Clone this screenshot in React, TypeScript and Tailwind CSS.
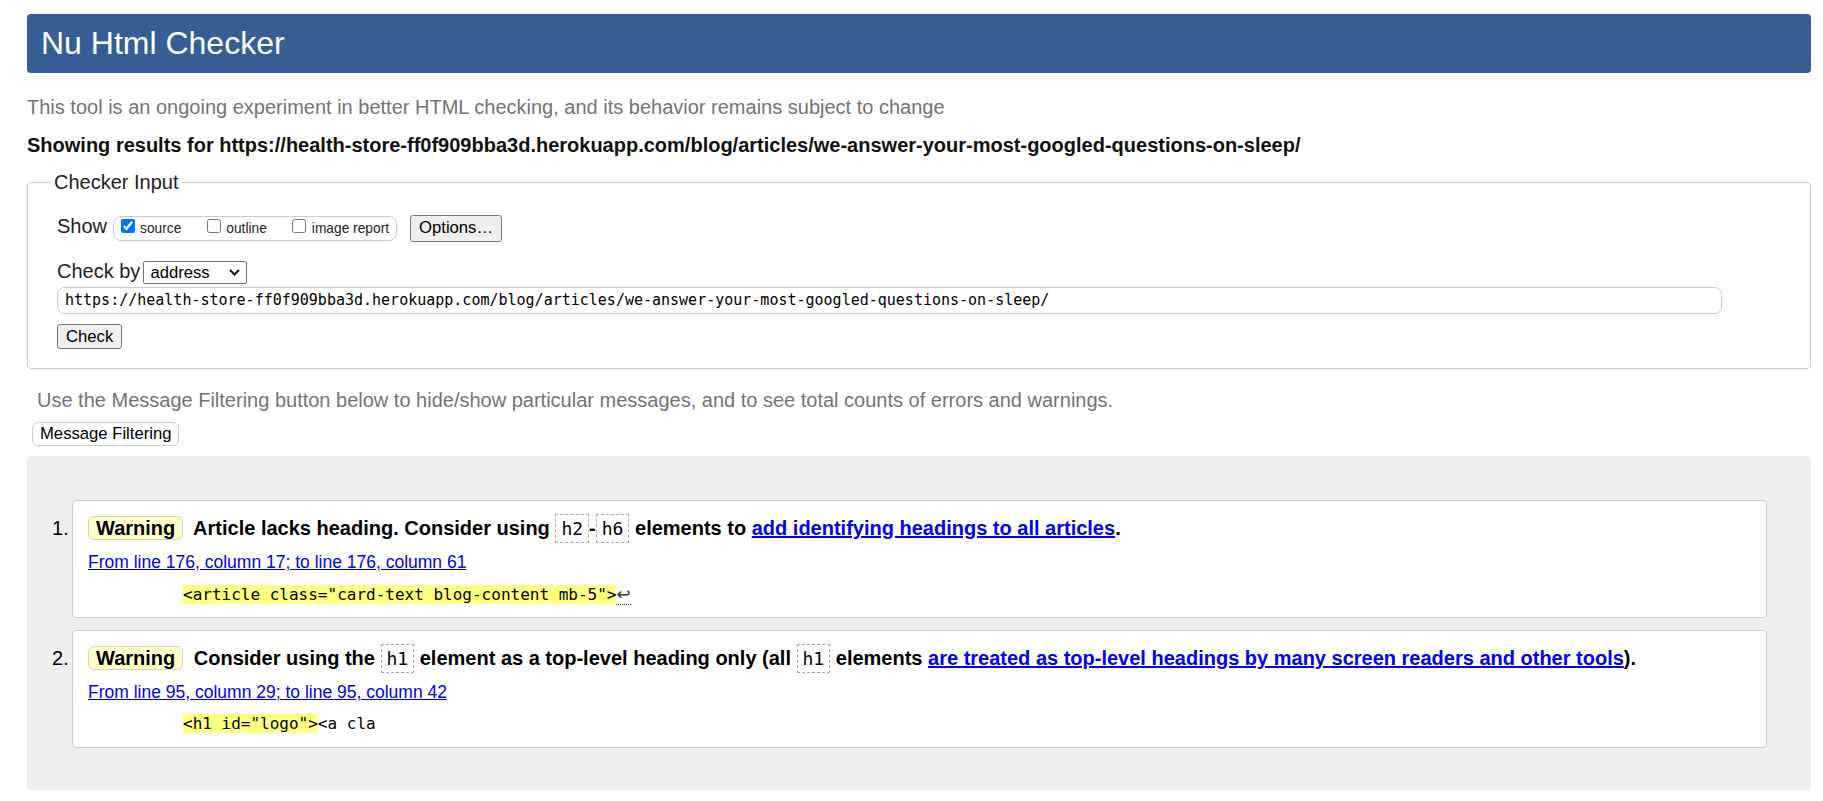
import React from "react";

const mono = "font-['DejaVu_Sans_Mono',monospace]";

function CodeBox({ children }: { children: React.ReactNode }) {
  return (
    <code
      className={`${mono} inline-block border border-dashed border-[#a3a3a3] px-[5px] text-[18px] font-normal leading-[27px] text-black`}
    >
      {children}
    </code>
  );
}

function Badge() {
  return (
    <span className="mr-[5px] inline-block rounded-[6px] border border-[#d6d6a8] bg-[#ffffcc] px-[7px] leading-[22px]">
      Warning
    </span>
  );
}

function Item({
  n,
  message,
  loc,
  code,
}: {
  n: number;
  message: React.ReactNode;
  loc: string;
  code: React.ReactNode;
}) {
  return (
    <li className="flex">
      <span className="w-[20px] shrink-0 pt-[13px] text-[20px] leading-[30px] text-black">{n}.</span>
      <div className="h-[118px] flex-1 overflow-hidden rounded-[4px] border border-[#cccccc] bg-white px-[15px] pt-[12px]">
        <p className="h-[30px] text-[20px] font-bold leading-[30px] text-black">
          <Badge /> {message}
        </p>
        <p className="mt-[9px] h-[21px] text-[17.5px] leading-[21px]">
          <a href="#" className="text-[#0000ee] underline">
            {loc}
          </a>
        </p>
        <p className={`${mono} mt-[10px] h-[22px] pl-[95px] text-[16px] leading-[22px] text-black`}>{code}</p>
      </div>
    </li>
  );
}

export default function App() {
  return (
    <div className="min-h-[801px] bg-white pt-[14px] pr-[12px] pl-[27px] font-['Liberation_Sans',Arial,sans-serif] text-black">
      <header className="h-[59px] rounded-[4px] bg-[#365d95] pl-[14px] text-[32px] leading-[59px] text-white">
        Nu Html Checker
      </header>

      <p className="mt-[23px] text-[20px] leading-[23px] text-[#737373]">
        This tool is an ongoing experiment in better HTML checking, and its behavior remains subject to change
      </p>

      <p className="mt-[15px] text-[20px] font-bold leading-[23px] text-[#111]">
        Showing results for https://health-store-ff0f909bba3d.herokuapp.com/blog/articles/we-answer-your-most-googled-questions-on-sleep/
      </p>

      <fieldset className="mt-[14px] rounded-[4px] border border-[#cccccc] pt-[21px] pr-[20px] pb-[19px] pl-[29px]">
        <legend className="ml-[-6px] px-[3px] text-[20px] leading-[23px] text-[#222]">Checker Input</legend>

        <div className="flex items-baseline">
          <span className="text-[20px] leading-[23px] text-[#222]">Show</span>
          <span className="ml-[6px] inline-flex items-baseline rounded-[8px] border border-[#cccccc] pt-[2px] pr-[7px] pb-[3px] pl-[7px] text-[13.75px] leading-[16px] text-[#222]">
            <input type="checkbox" defaultChecked className="h-[14px] w-[14px] accent-[#0075ff]" />
            <span className="ml-[5px]">source</span>
            <input type="checkbox" className="ml-[26px] h-[14px] w-[14px]" />
            <span className="ml-[5px]">outline</span>
            <input type="checkbox" className="ml-[25px] h-[14px] w-[14px]" />
            <span className="ml-[6px]">image report</span>
          </span>
          <button className="ml-[13px] rounded-[3px] border border-[#767676] bg-[#efefef] px-[8px] pt-[2px] pb-[4px] text-[16.67px] leading-[19px] text-black">
            Options…
          </button>
        </div>

        <div className="mt-[18px] flex items-baseline">
          <span className="text-[20px] leading-[23px] text-[#222]">Check by</span>
          <span className="ml-[3px] inline-flex w-[104px] items-baseline justify-between rounded-[2px] border border-[#767676] bg-white py-[1px] pr-[6px] pl-[6px] text-[16.67px] leading-[19px] text-black">
            <span>address</span>
            <svg width="11" height="7" viewBox="0 0 11 7" className="self-center">
              <path d="M1 1 L5.5 5.5 L10 1" fill="none" stroke="#111" strokeWidth="2" />
            </svg>
          </span>
        </div>

        <div
          className={`${mono} mt-[3px] flex h-[27px] w-[1665px] items-center rounded-[7px] border border-[#cccccc] pl-[7px] text-[15px] text-black`}
        >
          https://health-store-ff0f909bba3d.herokuapp.com/blog/articles/we-answer-your-most-googled-questions-on-sleep/
        </div>

        <button className="mt-[10px] block rounded-[3px] border border-[#767676] bg-[#efefef] px-[8px] pt-[2px] pb-[2px] text-[16.67px] leading-[19px] text-black">
          Check
        </button>
      </fieldset>

      <p className="mt-[20px] ml-[10px] text-[20px] leading-[23px] text-[#737373]">
        Use the Message Filtering button below to hide/show particular messages, and to see total counts of errors and warnings.
      </p>

      <button className="mt-[10px] ml-[5px] block rounded-[6px] border border-[#cccccc] bg-white px-[7px] pt-[1px] pb-[2px] text-[16.67px] leading-[19px] text-black">
        Message Filtering
      </button>

      <ol className="mt-[10px] flex h-[334px] flex-col gap-[12px] rounded-[4px] bg-[#eeeeee] pt-[44px] pr-[44px] pl-[25px]">
        <Item
          n={1}
          message={
            <>
              Article lacks heading. Consider using <CodeBox>h2</CodeBox>-<CodeBox>h6</CodeBox> elements to{" "}
              <a href="#" className="text-[#0000ee] underline">
                add identifying headings to all articles
              </a>
              .
            </>
          }
          loc="From line 176, column 17; to line 176, column 61"
          code={
            <>
              <mark className="bg-[#ffff80] text-black">{'<article class="card-text blog-content mb-5">'}</mark>
              <span className="border-b border-dotted border-[#333] font-['DejaVu_Sans',sans-serif] text-[17px] leading-[22px] text-[#333]">
                ↩
              </span>
            </>
          }
        />
        <Item
          n={2}
          message={
            <>
              Consider using the <CodeBox>h1</CodeBox> element as a top-level heading only (all <CodeBox>h1</CodeBox>{" "}
              elements{" "}
              <a href="#" className="text-[#0000ee] underline">
                are treated as top-level headings by many screen readers and other tools
              </a>
              ).
            </>
          }
          loc="From line 95, column 29; to line 95, column 42"
          code={
            <>
              <mark className="bg-[#ffff80] text-black">{'<h1 id="logo">'}</mark>
              {"<a cla"}
            </>
          }
        />
      </ol>
    </div>
  );
}
